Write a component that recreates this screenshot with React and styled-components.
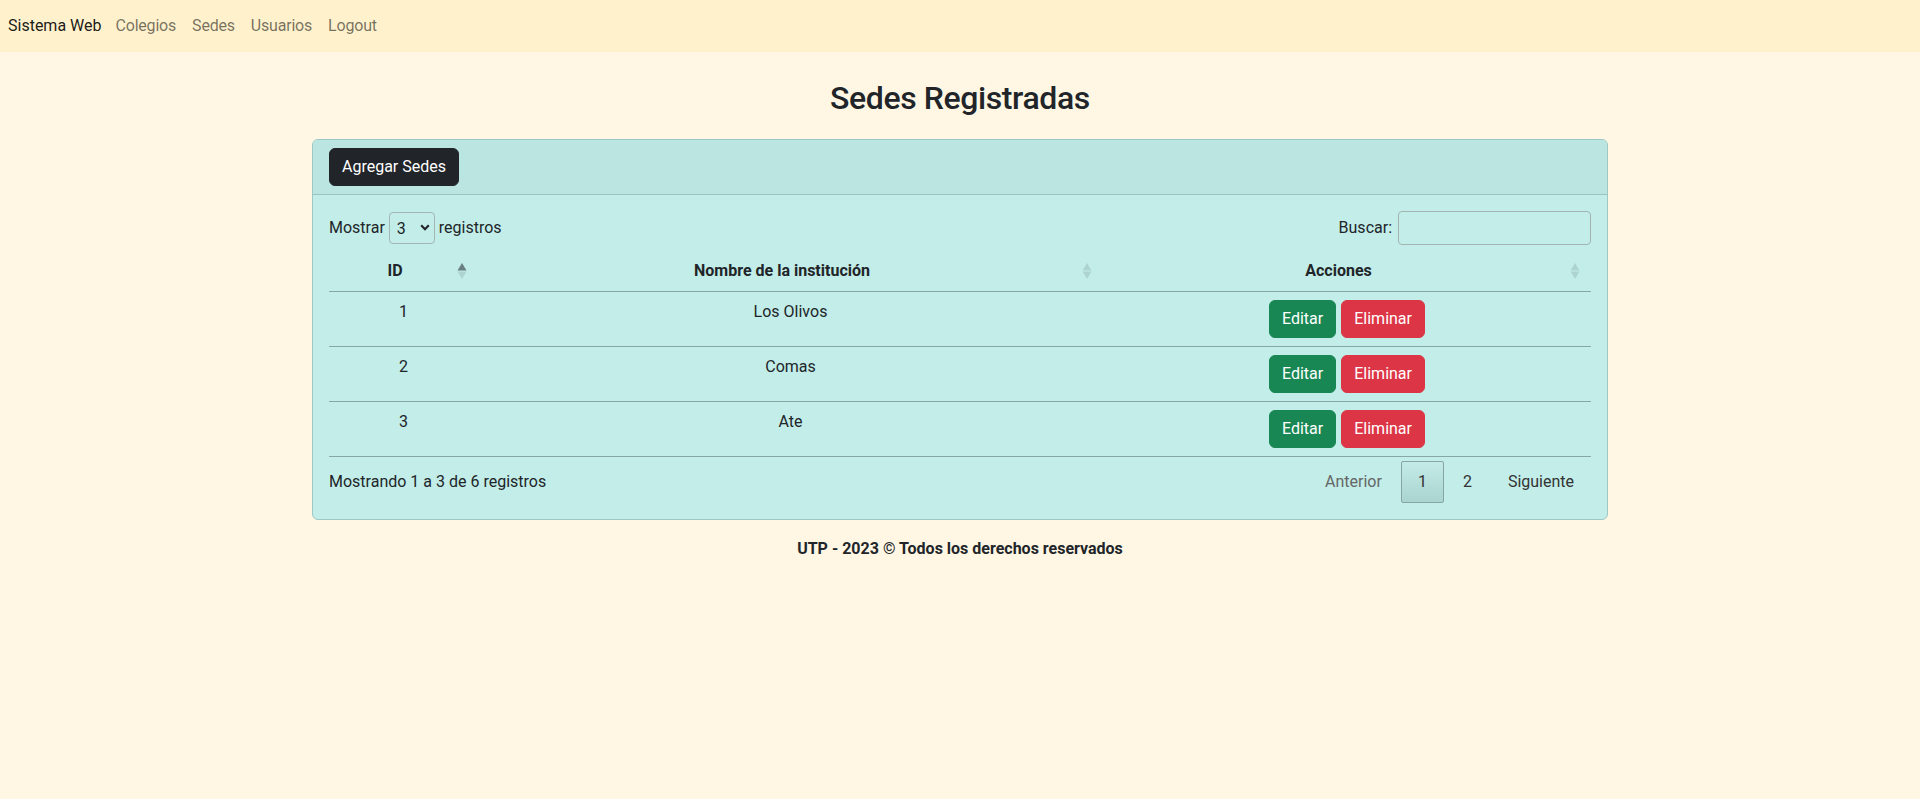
import React from "react";
import styled, { createGlobalStyle, css } from "styled-components";

const GlobalStyle = createGlobalStyle`
  * { box-sizing: border-box; }
  html, body { margin: 0; padding: 0; }
  body {
    background: #fff7e3;
    font-family: Roboto, "Liberation Sans", sans-serif;
    font-size: 16px;
    line-height: 24px;
    color: #212529;
  }
`;

const Navbar = styled.nav`
  height: 52px;
  background: #fff1cc;
  display: flex;
  align-items: center;
  padding: 0 8px;
`;

const Brand = styled.a`
  color: rgba(0, 0, 0, 0.9);
  text-decoration: none;
  margin-right: 6px;
`;

const NavLink = styled.a`
  color: rgba(0, 0, 0, 0.55);
  text-decoration: none;
  padding: 0 8px;
  letter-spacing: -0.2px;
`;

const Container = styled.main`
  width: 1296px;
  margin: 0 auto;
  display: flex;
  flex-direction: column;
`;

const Title = styled.h2`
  margin: 27px 0 22px;
  text-align: center;
  font-size: 32px;
  font-weight: 500;
  line-height: 38px;
  letter-spacing: -0.4px;
`;

const Card = styled.section`
  border: 1px solid #9dc9c4;
  border-radius: 6px;
  overflow: hidden;
  background: #c2ede8;
`;

const CardHeader = styled.header`
  background: #bbe5e1;
  border-bottom: 1px solid #9dc3bf;
  padding: 8px 16px;
  display: flex;
`;

const Button = styled.button`
  font-family: inherit;
  font-size: 16px;
  line-height: 24px;
  padding: 6px 12px;
  border-radius: 6px;
  border: 1px solid transparent;
  color: #fff;
  cursor: pointer;
  ${({ $variant }) =>
    $variant === "dark"
      ? css`background: #212529; border-color: #212529;`
      : $variant === "success"
      ? css`background: #198754; border-color: #198754;`
      : css`background: #dc3545; border-color: #dc3545;`}
`;

const CardBody = styled.div`
  padding: 16px;
  display: flex;
  flex-direction: column;
`;

const Controls = styled.div`
  display: flex;
  justify-content: space-between;
  align-items: center;
  height: 34px;
  margin-bottom: 6px;
`;

const Label = styled.label`
  display: flex;
  align-items: center;
  gap: 4px;
`;

const SelectWrap = styled.span`
  position: relative;
  display: inline-flex;
`;

const Select = styled.select`
  appearance: none;
  -webkit-appearance: none;
  width: 46px;
  height: 32px;
  padding: 0 0 0 7px;
  font-family: inherit;
  font-size: 16px;
  color: #212529;
  background: transparent;
  border: 1px solid #a3b6b4;
  border-radius: 4px;
`;

const Chevron = styled.svg`
  position: absolute;
  right: 5px;
  top: 12px;
  pointer-events: none;
`;

const SearchInput = styled.input`
  width: 193px;
  height: 34px;
  margin-left: 2px;
  border: 1px solid #a3b3b1;
  border-radius: 4px;
  background: transparent;
  font-family: inherit;
  font-size: 16px;
`;

const Table = styled.table`
  width: 100%;
  border-collapse: collapse;
  table-layout: fixed;
  border-bottom: 1px solid #86a7a4;
`;

const Th = styled.th`
  position: relative;
  padding: 8px 25px 8px 8px;
  text-align: center;
  font-weight: 700;
  border-bottom: 1px solid #86a7a4;
  width: ${({ $w }) => $w}px;
`;

const Td = styled.td`
  padding: 8px;
  text-align: center;
  vertical-align: top;
  border-bottom: 1px solid #86a7a4;
`;

const SortIcon = styled.svg`
  position: absolute;
  right: 11px;
  top: 12px;
`;

const Actions = styled.div`
  display: flex;
  justify-content: center;
  gap: 5px;
`;

const TableFooter = styled.div`
  display: flex;
  justify-content: space-between;
  align-items: center;
  margin-top: 4px;
  height: 42px;
`;

const Pagination = styled.div`
  display: flex;
  gap: 2px;
`;

const PageButton = styled.a`
  padding: 8px 16px;
  line-height: 24px;
  border: 1px solid transparent;
  border-radius: 2px;
  color: #333;
  ${({ $active }) =>
    $active &&
    css`
      border-color: #87a5a2;
      background: linear-gradient(to bottom, #c4ebe7 0%, #a9d4cf 100%);
    `}
  ${({ $disabled }) => $disabled && css`color: #666;`}
`;

const Footer = styled.footer`
  margin-top: 17px;
  text-align: center;
  font-weight: 700;
`;

function Sort({ active }) {
  return (
    <SortIcon width="10" height="16" viewBox="0 0 10 16">
      <polygon points="5,0 9.5,7.4 0.5,7.4" fill="#212529" opacity={active ? 0.55 : 0.12} />
      <polygon points="0.5,8.6 9.5,8.6 5,16" fill="#212529" opacity={0.12} />
    </SortIcon>
  );
}

const rows = [
  { id: 1, name: "Los Olivos" },
  { id: 2, name: "Comas" },
  { id: 3, name: "Ate" },
];

export default function App() {
  return (
    <>
      <GlobalStyle />
      <Navbar>
        <Brand href="#">Sistema Web</Brand>
        <NavLink href="#">Colegios</NavLink>
        <NavLink href="#">Sedes</NavLink>
        <NavLink href="#">Usuarios</NavLink>
        <NavLink href="#">Logout</NavLink>
      </Navbar>
      <Container>
        <Title>Sedes Registradas</Title>
        <Card>
          <CardHeader>
            <Button $variant="dark">Agregar Sedes</Button>
          </CardHeader>
          <CardBody>
            <Controls>
              <Label>
                Mostrar
                <SelectWrap>
                  <Select defaultValue="3">
                    <option>3</option>
                    <option>5</option>
                    <option>10</option>
                  </Select>
                  <Chevron width="10" height="7" viewBox="0 0 10 7">
                    <path d="M1.2 1.3 L5 5.2 L8.8 1.3" fill="none" stroke="#212529" strokeWidth="2.1" />
                  </Chevron>
                </SelectWrap>
                registros
              </Label>
              <Label>
                Buscar:
                <SearchInput type="search" />
              </Label>
            </Controls>
            <Table>
              <thead>
                <tr>
                  <Th $w={149}>ID<Sort active /></Th>
                  <Th $w={625}>Nombre de la institución<Sort /></Th>
                  <Th $w={488}>Acciones<Sort /></Th>
                </tr>
              </thead>
              <tbody>
                {rows.map((r) => (
                  <tr key={r.id}>
                    <Td>{r.id}</Td>
                    <Td>{r.name}</Td>
                    <Td>
                      <Actions>
                        <Button $variant="success">Editar</Button>
                        <Button $variant="danger">Eliminar</Button>
                      </Actions>
                    </Td>
                  </tr>
                ))}
              </tbody>
            </Table>
            <TableFooter>
              <span>Mostrando 1 a 3 de 6 registros</span>
              <Pagination>
                <PageButton $disabled>Anterior</PageButton>
                <PageButton $active>1</PageButton>
                <PageButton>2</PageButton>
                <PageButton>Siguiente</PageButton>
              </Pagination>
            </TableFooter>
          </CardBody>
        </Card>
        <Footer>UTP - 2023 © Todos los derechos reservados</Footer>
      </Container>
    </>
  );
}
